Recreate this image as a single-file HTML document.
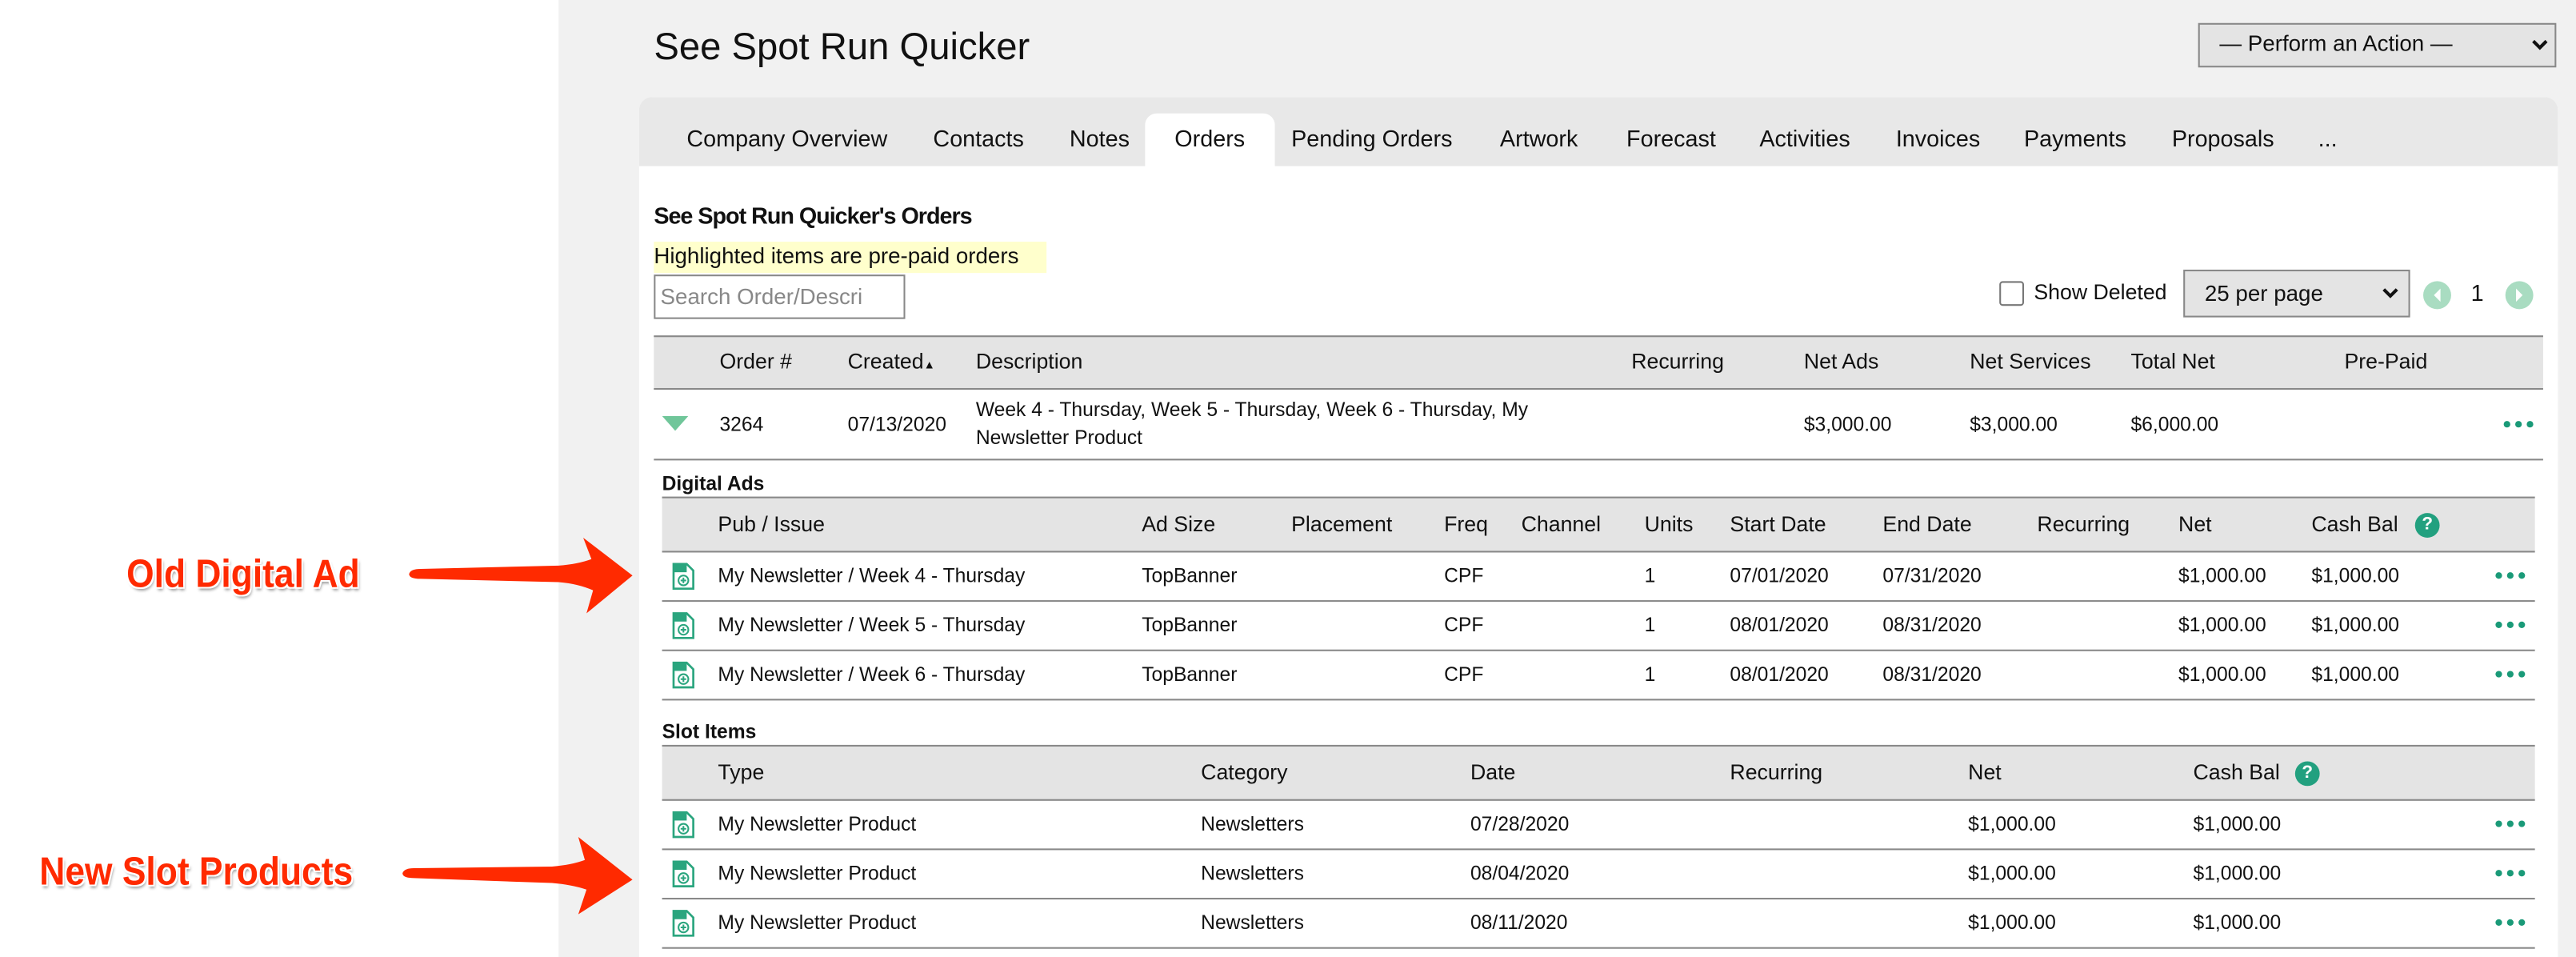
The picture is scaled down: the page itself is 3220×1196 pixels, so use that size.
<!DOCTYPE html>
<html><head><meta charset="utf-8"><style>
html,body{margin:0;padding:0;width:3220px;height:1196px;overflow:hidden;background:#fff}
#w{position:absolute;left:0;top:0;width:1568px;height:582px;transform:scale(2.05357,2.0550);transform-origin:0 0;font-family:"Liberation Sans",sans-serif;color:#111}
.t{position:absolute;white-space:nowrap;font-size:13px;line-height:16px}
.bx{position:absolute}
.dots{position:absolute;width:18px;height:4px}
.dots i{position:absolute;top:0;width:4px;height:4px;border-radius:50%;background:#1a9a78}
.q{position:absolute;width:15px;height:15px;border-radius:50%;background:#22a07f;color:#fff;font-size:11px;font-weight:bold;text-align:center;line-height:15px}
.an{position:absolute;white-space:nowrap;font-size:24px;line-height:28px;font-weight:bold;color:#ff2a00;text-shadow:1px 1px 0 #fff,-1px -1px 0 #fff,1px -1px 0 #fff,-1px 1px 0 #fff,1px 2px 2px #999;transform-origin:0 50%}
</style></head><body><div id="w">
<div class="bx" style="left:340px;top:0;width:1228px;height:582px;background:#f1f1f1"></div>
<div class="t" style="left:398px;top:14px;font-size:23px;line-height:28px">See Spot Run Quicker</div>
<div class="bx" style="left:1338px;top:14px;width:216px;height:25px;background:#e4e4e4;border:1px solid #888"></div>
<div class="t" style="left:1351px;top:19px;font-size:13.5px">— Perform an Action —</div>
<svg class="bx" style="left:1541px;top:23px" width="10" height="8"><path d="M1 2 L5 6 L9 2" stroke="#111" stroke-width="2" fill="none"/></svg>

<div class="bx" style="left:389px;top:59px;width:1168px;height:523px;background:#fff;border-radius:8px 8px 0 0;overflow:hidden">
 <div class="bx" style="left:0;top:0;width:1168px;height:42px;background:#e8e8e8"></div>
 <div class="bx" style="left:308px;top:10px;width:79px;height:33px;background:#fff;border-radius:7px 7px 0 0"></div>
</div>
<div class="t" style="left:418px;top:76px;font-size:14px">Company Overview</div>
<div class="t" style="left:568px;top:76px;font-size:14px">Contacts</div>
<div class="t" style="left:651px;top:76px;font-size:14px">Notes</div>
<div class="t" style="left:715px;top:76px;font-size:14px">Orders</div>
<div class="t" style="left:786px;top:76px;font-size:14px">Pending Orders</div>
<div class="t" style="left:913px;top:76px;font-size:14px">Artwork</div>
<div class="t" style="left:990px;top:76px;font-size:14px">Forecast</div>
<div class="t" style="left:1071px;top:76px;font-size:14px">Activities</div>
<div class="t" style="left:1154px;top:76px;font-size:14px">Invoices</div>
<div class="t" style="left:1232px;top:76px;font-size:14px">Payments</div>
<div class="t" style="left:1322px;top:76px;font-size:14px">Proposals</div>
<div class="t" style="left:1411px;top:76px;font-size:14px">...</div>

<div class="t" style="left:398px;top:123px;font-size:14px;font-weight:bold;letter-spacing:-0.5px">See Spot Run Quicker's Orders</div>
<div class="bx" style="left:398px;top:147px;width:239px;height:19px;background:#ffffcc"></div>
<div class="t" style="left:398px;top:148px;font-size:13.5px">Highlighted items are pre-paid orders</div>
<div class="bx" style="left:398px;top:167px;width:151px;height:25px;border:1px solid #888;background:#fff"></div>
<div class="t" style="left:402px;top:173px;font-size:13.5px;color:#888;width:130px;overflow:hidden">Search Order/Descri</div>

<div class="bx" style="left:1217px;top:171px;width:13px;height:13px;border:1px solid #777;border-radius:2px;background:#fff"></div>
<div class="t" style="left:1238px;top:170px">Show Deleted</div>
<div class="bx" style="left:1329px;top:164px;width:136px;height:27px;background:#e4e4e4;border:1px solid #888"></div>
<div class="t" style="left:1342px;top:171px;font-size:13.5px">25 per page</div>
<svg class="bx" style="left:1450px;top:174px" width="10" height="8"><path d="M1 2 L5 6 L9 2" stroke="#111" stroke-width="2" fill="none"/></svg>
<svg class="bx" style="left:1475px;top:170px" width="70" height="20"><circle cx="8.5" cy="9.5" r="8.5" fill="#a9dcc1"/><path d="M10.5 5.5 L6.5 9.5 L10.5 13.5Z" fill="#fff"/><circle cx="58.5" cy="9.5" r="8.5" fill="#a9dcc1"/><path d="M56.5 5.5 L60.5 9.5 L56.5 13.5Z" fill="#fff"/></svg>
<div class="t" style="left:1504px;top:170px;font-size:14px">1</div>

<div class="bx" style="left:398px;top:204px;width:1150px;height:31px;background:#e4e4e4;border-top:1px solid #888;border-bottom:1px solid #888"></div>
<div class="t" style="left:438px;top:212px">Order #</div>
<div class="t" style="left:516px;top:212px">Created<span style="font-size:7px">▲</span></div>
<div class="t" style="left:594px;top:212px">Description</div>
<div class="t" style="left:993px;top:212px">Recurring</div>
<div class="t" style="left:1098px;top:212px">Net Ads</div>
<div class="t" style="left:1199px;top:212px">Net Services</div>
<div class="t" style="left:1297px;top:212px">Total Net</div>
<div class="t" style="left:1427px;top:212px">Pre-Paid</div>
<svg class="bx" style="left:403px;top:253px" width="16" height="10"><path d="M0 0 H16 L8 9Z" fill="#70c69a"/></svg>
<div class="t" style="left:438px;top:250px;font-size:12px">3264</div>
<div class="t" style="left:516px;top:250px;font-size:12px">07/13/2020</div>
<div class="t" style="left:594px;top:241px;font-size:12px;line-height:17px">Week 4 - Thursday, Week 5 - Thursday, Week 6 - Thursday, My<br>Newsletter Product</div>
<div class="t" style="left:1098px;top:250px;font-size:12px">$3,000.00</div>
<div class="t" style="left:1199px;top:250px;font-size:12px">$3,000.00</div>
<div class="t" style="left:1297px;top:250px;font-size:12px">$6,000.00</div>
<div class="dots" style="left:1524px;top:256px"><i style="left:0"></i><i style="left:7px"></i><i style="left:14px"></i></div>
<div class="bx" style="left:398px;top:279px;width:1150px;height:1px;background:#888"></div>

<div class="t" style="left:403px;top:286px;font-size:12px;font-weight:bold">Digital Ads</div>
<div class="bx" style="left:403px;top:302px;width:1140px;height:32px;background:#e4e4e4;border-top:1px solid #888;border-bottom:1px solid #888"></div>
<div class="t" style="left:437px;top:311px">Pub / Issue</div>
<div class="t" style="left:695px;top:311px">Ad Size</div>
<div class="t" style="left:786px;top:311px">Placement</div>
<div class="t" style="left:879px;top:311px">Freq</div>
<div class="t" style="left:926px;top:311px">Channel</div>
<div class="t" style="left:1001px;top:311px">Units</div>
<div class="t" style="left:1053px;top:311px">Start Date</div>
<div class="t" style="left:1146px;top:311px">End Date</div>
<div class="t" style="left:1240px;top:311px">Recurring</div>
<div class="t" style="left:1326px;top:311px">Net</div>
<div class="t" style="left:1407px;top:311px">Cash Bal</div>
<div class="q" style="left:1470px;top:312px">?</div>

<div class="t" style="left:403px;top:437px;font-size:12px;font-weight:bold">Slot Items</div>
<div class="bx" style="left:403px;top:453px;width:1140px;height:32px;background:#e4e4e4;border-top:1px solid #888;border-bottom:1px solid #888"></div>
<div class="t" style="left:437px;top:462px">Type</div>
<div class="t" style="left:731px;top:462px">Category</div>
<div class="t" style="left:895px;top:462px">Date</div>
<div class="t" style="left:1053px;top:462px">Recurring</div>
<div class="t" style="left:1198px;top:462px">Net</div>
<div class="t" style="left:1335px;top:462px">Cash Bal</div>
<div class="q" style="left:1397px;top:463px">?</div>

<div id="rows"></div>

<div class="an" style="left:77px;top:336px;transform:scaleX(0.9)">Old Digital Ad</div>
<div class="an" style="left:24px;top:517px;transform:scaleX(0.9)">New Slot Products</div>
<svg class="bx" style="left:0;top:0" width="400" height="582">
<path d="M249 349 Q250 346 256 346 L340 344 Q352 343 360 340 L355 327 L385 350 L357 373 L361 359 Q352 355 340 354 L256 352 Q249 352 249 349Z" fill="#ff2a00"/>
<path d="M245 531 Q246 528 252 528 L336 527 Q348 526 356 523 L352 509 L385 535 L352 556 L357 541 Q348 538 336 537 L252 534 Q245 534 245 531Z" fill="#ff2a00"/>
</svg>
</div>
<script>
var rows=document.getElementById('rows'),h='';
function icon(x,y){return '<svg class="bx" style="left:'+x+'px;top:'+y+'px" width="14" height="17"><path d="M1 1 H9 L13 5 V16 H1Z" fill="#fff" stroke="#2aa57e" stroke-width="1.3"/><rect x="1" y="1" width="8" height="5" fill="#2aa57e"/><circle cx="7" cy="11" r="3" fill="none" stroke="#2aa57e" stroke-width="1"/><path d="M7 9.3V12.7M5.3 11H8.7" stroke="#2aa57e" stroke-width="1"/></svg>';}
function dots(x,y){return '<div class="dots" style="left:'+x+'px;top:'+y+'px"><i style="left:0"></i><i style="left:7px"></i><i style="left:14px"></i></div>';}
function t(x,y,s){return '<div class="t" style="left:'+x+'px;top:'+y+'px;font-size:12px">'+s+'</div>';}
var da=[['4','07/01/2020','07/31/2020'],['5','08/01/2020','08/31/2020'],['6','08/01/2020','08/31/2020']];
for(var i=0;i<3;i++){var y=335+i*30,c=y+15;
h+=icon(409,c-8)+t(437,c-8,'My Newsletter / Week '+da[i][0]+' - Thursday')+t(695,c-8,'TopBanner')+t(879,c-8,'CPF')+t(1001,c-8,'1')+t(1053,c-8,da[i][1])+t(1146,c-8,da[i][2])+t(1326,c-8,'$1,000.00')+t(1407,c-8,'$1,000.00')+dots(1519,c-2)+'<div class="bx" style="left:403px;top:'+(y+30)+'px;width:1140px;height:1px;background:#888"></div>';}
var sd=['07/28/2020','08/04/2020','08/11/2020'];
for(var i=0;i<3;i++){var y=486+i*30,c=y+15;
h+=icon(409,c-8)+t(437,c-8,'My Newsletter Product')+t(731,c-8,'Newsletters')+t(895,c-8,sd[i])+t(1198,c-8,'$1,000.00')+t(1335,c-8,'$1,000.00')+dots(1519,c-2)+'<div class="bx" style="left:403px;top:'+(y+30)+'px;width:1140px;height:1px;background:#888"></div>';}
rows.innerHTML=h;
</script>
</body></html>
